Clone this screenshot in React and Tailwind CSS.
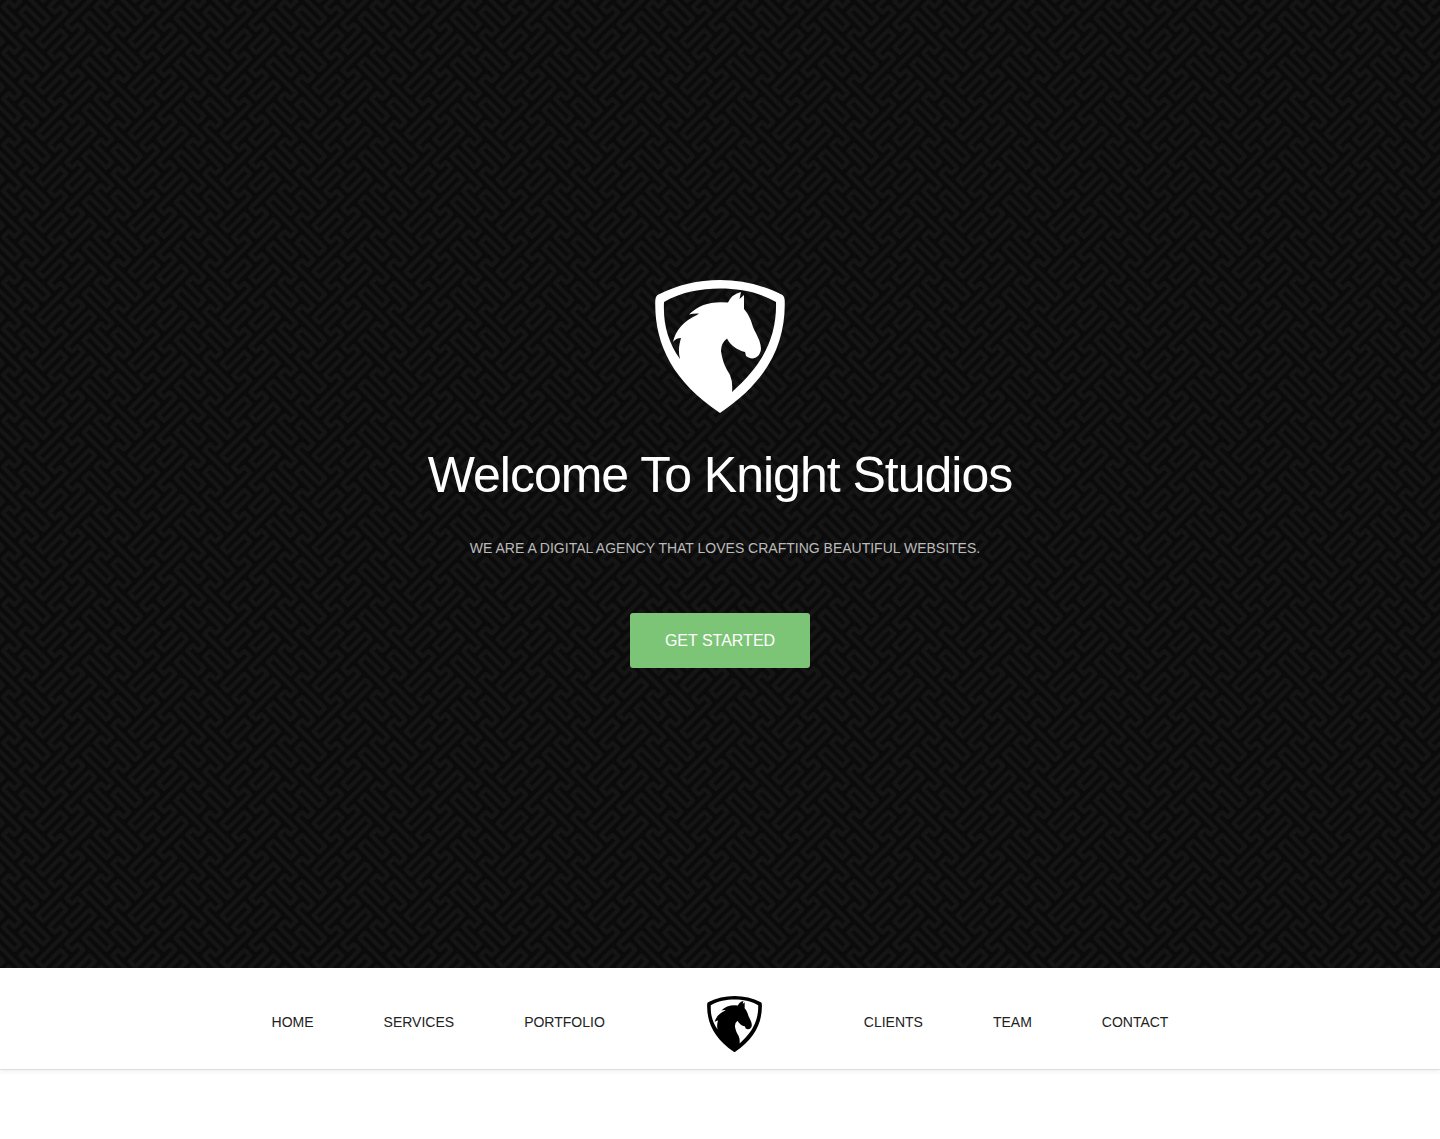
const SHIELD =
  "M2.500 15C22 5 43 0 65 0S108 5 127.500 15Q129.500 16.500 129.700 20C131 63 113 101 65 133C17 101 -1 63 .3 20Q.5 16.500 2.500 15Z" +
  "M9 22C8 44 13 62 25 79C23 71 24 65 26 58Q21 58 18 62Q22 44 42 35L44 33.500Q39 33 34 34.500Q48 20 73 22.500Q77 14 86 12L84.500 19L89 15L89 29C94 35 96 40 98 47C101 54 106 61 106 69C105 78 97 81 91 76L90 72C82 70 76 66 72 58.500Q66 63 66 71C68 84 71 88 75 95Q78 102 77 112C107 86 122 58 121 22C104 12 84 8.500 65 8.500S26 12 9 22Z";

function Shield({ className }) {
  return (
    <svg viewBox="0 0 130 133" className={className} role="img" aria-label="Knight Studios" fill="currentColor" fillRule="evenodd">
      <path d={SHIELD} />
    </svg>
  );
}

// The fretwork is drawn on a 16 x 8 lattice that repeats in both directions.
const TILE_X = [-16, 0, 16];
const TILE_Y = [-16, -8, 0, 8];

function Fretwork() {
  return (
    <svg className="absolute inset-0 h-full w-full" aria-hidden="true">
      <defs>
        <path id="fret-line" d="M0 -1L-1 0L0 1L3 -2L4 -1L3 0L2 1L1 2L2 3L3 2L4 3L3 4L0 7" />
        <g id="fret-arm">
          <use href="#fret-line" />
          <use href="#fret-line" transform="rotate(180 4 0)" />
        </g>
        <pattern id="fret" width="92" height="46" patternUnits="userSpaceOnUse">
          <rect width="92" height="46" fill="#0b0b0b" />
          <g
            transform="translate(43.3 41.3) scale(5.75)"
            fill="none"
            stroke="#151515"
            strokeWidth="0.7"
            strokeLinecap="round"
            strokeLinejoin="round"
          >
            {TILE_X.map((x) =>
              TILE_Y.map((y) => (
                <g key={`${x},${y}`} transform={`translate(${x} ${y})`}>
                  <use href="#fret-arm" />
                  <use href="#fret-arm" transform="translate(16 -4) scale(-1 1)" />
                </g>
              ))
            )}
          </g>
        </pattern>
      </defs>
      <rect width="100%" height="100%" fill="url(#fret)" />
    </svg>
  );
}

const LEFT_LINKS = ["Home", "Services", "Portfolio"];
const RIGHT_LINKS = ["Clients", "Team", "Contact"];

function NavLinks({ items }) {
  return (
    <ul className="flex gap-[70px] pb-1">
      {items.map((item) => (
        <li key={item}>
          <a href={`#${item.toLowerCase()}`} className="text-sm uppercase text-[#222222]">
            {item}
          </a>
        </li>
      ))}
    </ul>
  );
}

export default function App() {
  return (
    <div className="min-h-screen bg-white font-['Liberation_Sans',Arial,sans-serif]">
      <header className="relative flex min-h-[85vh] flex-col items-center justify-center bg-[#0b0b0b] px-4 pb-5 text-center">
        <Fretwork />
        <Shield className="relative w-[130px] text-white" />
        <h1 className="relative mt-8 text-[50px] leading-[60px] tracking-[-1px] text-white">Welcome To Knight Studios</h1>
        <p className="relative mt-[33px] pl-[10px] text-sm uppercase text-[#bbbbbb]">
          We are a digital agency that loves crafting beautiful websites.
        </p>
        <button type="button" className="relative mt-[55px] h-[55px] rounded-[3px] bg-[#7cc576] px-[35px] text-base uppercase text-white">
          Get started
        </button>
      </header>
      <nav className="flex items-center justify-center gap-[102px] border-b border-[#dddddd] bg-white pt-7 pb-[17px] shadow-[0_2px_4px_rgba(0,0,0,0.06)]">
        <NavLinks items={LEFT_LINKS} />
        <a href="#home">
          <Shield className="w-[55px] text-black" />
        </a>
        <NavLinks items={RIGHT_LINKS} />
      </nav>
    </div>
  );
}
